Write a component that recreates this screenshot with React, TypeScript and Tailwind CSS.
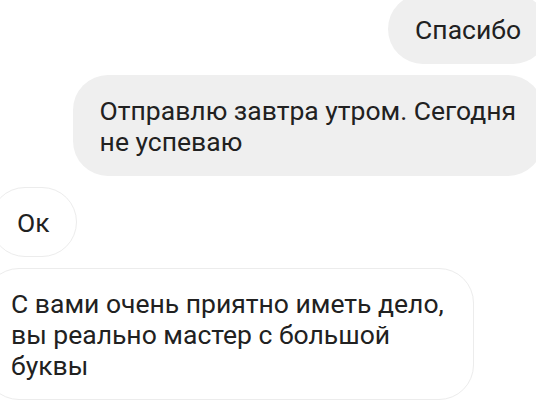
const messages = [
  { id: 1, mine: true, lines: ['Спасибо'], shift: '-mr-[12px]' },
  {
    id: 2,
    mine: true,
    lines: ['Отправлю завтра утром. Сегодня', 'не успеваю'],
    shift: '-mr-[7px]',
  },
  { id: 3, mine: false, lines: ['Ок'], shift: '-ml-[10px]', pad: 'pr-[26px]' },
  {
    id: 4,
    mine: false,
    lines: ['С вами очень приятно иметь дело,', 'вы реально мастер с большой', 'буквы'],
    shift: '-ml-[16px]',
    pad: 'pr-[29px]',
  },
]

function Lines({ lines }: { lines: string[] }) {
  return (
    <>
      {lines.map((line) => (
        <div key={line} className="whitespace-nowrap">
          {line}
        </div>
      ))}
    </>
  )
}

export default function App() {
  return (
    <div className="w-[536px] h-[402px] overflow-hidden bg-white font-['Roboto',sans-serif]">
      <div className="flex flex-col gap-[11px] -mt-[6px]">
        {messages.map((m) =>
          m.mine ? (
            <div key={m.id} className={`flex justify-end ${m.shift}`}>
              <div className="bg-[#efefef] rounded-[35px] px-[27px] pt-[20px] pb-[19px] text-[26.5px] leading-[31px] text-[#212121]">
                <Lines lines={m.lines} />
              </div>
            </div>
          ) : (
            <div key={m.id} className={`flex justify-start ${m.shift}`}>
              <div
                className={`bg-white border border-[#ececec] rounded-[35px] pl-[26px] ${m.pad} pt-[19px] pb-[18px] text-[26.5px] leading-[31px] text-[#212121]`}
              >
                <Lines lines={m.lines} />
              </div>
            </div>
          )
        )}
      </div>
    </div>
  )
}
